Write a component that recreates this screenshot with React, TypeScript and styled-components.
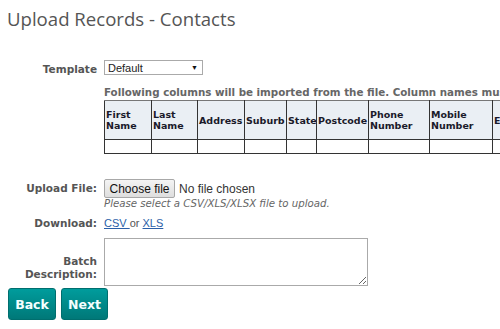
import { createGlobalStyle, styled } from "styled-components";

const GlobalStyle = createGlobalStyle`
  html, body {
    margin: 0;
    padding: 0;
    background: #fff;
    overflow: hidden;
  }
  body {
    font-family: "DejaVu Sans", Verdana, sans-serif;
    color: #555;
  }
`;

const columns = [
  { label: "First Name", width: 47 },
  { label: "Last Name", width: 46 },
  { label: "Address", width: 47 },
  { label: "Suburb", width: 42 },
  { label: "State", width: 30 },
  { label: "Postcode", width: 52 },
  { label: "Phone Number", width: 61 },
  { label: "Mobile Number", width: 63 },
  { label: "Email", width: 60 },
];

const tableWidth = columns.reduce((sum, c) => sum + c.width, 0);

function App() {
  return (
    <>
      <GlobalStyle />
      <Page>
        <Title>Upload Records - Contacts</Title>
        <Form>
          <Label $top={2}>Template</Label>
          <Field>
            <Select>
              <span>Default</span>
              <Arrow>▼</Arrow>
            </Select>
            <Notice>
              Following columns will be imported from the file. Column names must match exactly.
            </Notice>
            <Columns style={{ width: tableWidth }}>
              <colgroup>
                {columns.map((c) => (
                  <col key={c.label} style={{ width: c.width }} />
                ))}
              </colgroup>
              <thead>
                <tr>
                  {columns.map((c) => (
                    <HeadCell key={c.label}>{c.label}</HeadCell>
                  ))}
                </tr>
              </thead>
              <tbody>
                <tr>
                  {columns.map((c) => (
                    <BodyCell key={c.label} />
                  ))}
                </tr>
              </tbody>
            </Columns>
          </Field>

          <Label $top={3} $gap={25}>Upload File:</Label>
          <Field $gap={25}>
            <FileRow>
              <ChooseButton>Choose file</ChooseButton>
              <FileStatus>No file chosen</FileStatus>
            </FileRow>
            <Hint>Please select a CSV/XLS/XLSX file to upload.</Hint>
          </Field>

          <Label $top={0} $gap={7}>Download:</Label>
          <Field $gap={7}>
            <Links>
              <Link href="#">CSV </Link> or <Link href="#">XLS</Link>
            </Links>
          </Field>

          <Label $top={17} $gap={8}>
            Batch
            <br />
            Description:
          </Label>
          <Field $gap={8}>
            <Description />
          </Field>
        </Form>
        <Actions>
          <ActionButton $width={48}>Back</ActionButton>
          <ActionButton $width={47}>Next</ActionButton>
        </Actions>
      </Page>
    </>
  );
}

export default App;

const Page = styled.div`
  padding: 8px 0 0 8px;
  width: 700px;
`;

const Title = styled.h1`
  margin: 0 0 0 -1px;
  font-family: "Open Sans", "Segoe UI", sans-serif;
  font-weight: 400;
  font-size: 18.6px;
  line-height: 22px;
  color: #555;
`;

const Form = styled.div`
  display: grid;
  grid-template-columns: 89px 1fr;
  column-gap: 7px;
  margin-top: 31px;
`;

const Label = styled.div<{ $top: number; $gap?: number }>`
  text-align: right;
  font-weight: 700;
  font-size: 10.5px;
  line-height: 13px;
  color: #555;
  padding-top: ${(p) => p.$top}px;
  margin-top: ${(p) => p.$gap ?? 0}px;
`;

const Field = styled.div<{ $gap?: number }>`
  display: flex;
  flex-direction: column;
  align-items: flex-start;
  margin-top: ${(p) => p.$gap ?? 0}px;
`;

const Select = styled.div`
  box-sizing: border-box;
  width: 99px;
  height: 15px;
  margin-top: -1px;
  border: 1px solid #aaa;
  display: flex;
  justify-content: space-between;
  align-items: center;
  padding: 0 4px 0 3px;
  font-family: "Liberation Sans", Arial, sans-serif;
  font-size: 11px;
  color: #222;
`;

const Arrow = styled.span`
  font-size: 7px;
  color: #111;
`;

const Notice = styled.div`
  margin-top: 11px;
  white-space: nowrap;
  font-weight: 700;
  font-size: 10.3px;
  line-height: 12px;
  color: #666;
`;

const Columns = styled.table`
  margin-top: 2px;
  border-collapse: collapse;
  table-layout: fixed;
  border: 1px solid #222;
`;

const HeadCell = styled.th`
  box-sizing: border-box;
  height: 39px;
  padding: 0 0 0 1px;
  overflow: hidden;
  text-align: left;
  font-size: 9.5px;
  line-height: 11px;
  font-weight: 700;
  color: #1a1a2a;
  background: #eaeff4;
  border: 1px solid #333;
  border-top-color: #777;
  vertical-align: middle;
`;

const BodyCell = styled.td`
  height: 13px;
  padding: 0;
  border: 1px solid #333;
  border-top-color: #777;
`;

const FileRow = styled.div`
  display: flex;
  align-items: center;
  gap: 4px;
  font-family: "Liberation Sans", Arial, sans-serif;
  font-size: 12px;
  color: #333;
`;

const ChooseButton = styled.button`
  box-sizing: border-box;
  height: 19px;
  width: 71px;
  padding: 0;
  font-family: "Liberation Sans", Arial, sans-serif;
  font-size: 12px;
  color: #111;
  background: linear-gradient(#f4f4f4, #dedede);
  border: 1px solid #a8a8a8;
  border-radius: 2px;
`;

const FileStatus = styled.span`
  color: #333;
`;

const Hint = styled.div`
  margin-top: 0;
  font-style: italic;
  font-size: 10.2px;
  line-height: 12px;
  color: #666;
`;

const Links = styled.div`
  font-family: "Liberation Sans", Arial, sans-serif;
  font-size: 11px;
  line-height: 13px;
  color: #555;
`;

const Link = styled.a`
  color: #2b5fa8;
  text-decoration: underline;
`;

const Description = styled.textarea`
  box-sizing: border-box;
  width: 264px;
  height: 48px;
  margin: 0;
  border: 1px solid #aaa;
  resize: both;
`;

const Actions = styled.div`
  display: flex;
  gap: 5px;
  margin-top: 2px;
`;

const ActionButton = styled.button<{ $width: number }>`
  box-sizing: border-box;
  height: 32px;
  width: ${(p) => p.$width}px;
  padding: 0;
  border: 1px solid #006e6e;
  border-radius: 3px;
  background: linear-gradient(#009c9c, #007878);
  color: #f4ffff;
  font-family: "DejaVu Sans", Verdana, sans-serif;
  font-weight: 700;
  font-size: 12.5px;
`;
